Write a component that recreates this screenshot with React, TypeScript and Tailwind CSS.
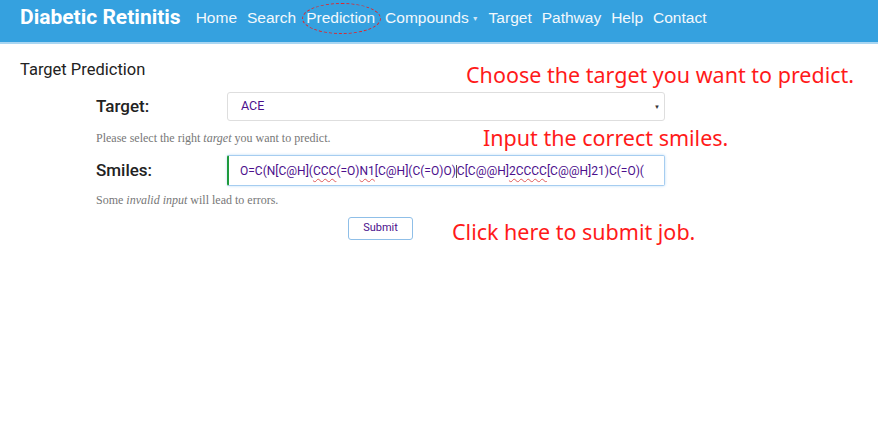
import { ReactNode } from 'react';

const navLinks = ['Home', 'Search', 'Prediction', 'Compounds', 'Target', 'Pathway', 'Help', 'Contact'];

function Squiggle({ children }: { children: ReactNode }) {
  return (
    <span className="underline decoration-wavy decoration-[#e05a5a] decoration-1 underline-offset-[3px]">
      {children}
    </span>
  );
}

function Note({ className, children }: { className: string; children: ReactNode }) {
  return (
    <div
      className={`absolute whitespace-nowrap text-[21.5px] leading-none text-[#ff1a1a] font-['Noto_Sans',sans-serif] ${className}`}
    >
      {children}
    </div>
  );
}

export default function App() {
  return (
    <div className="relative w-[878px] h-[422px] bg-white overflow-hidden font-['Roboto',sans-serif]">
      <header className="h-[44px] bg-[#35a1df] border-b-2 border-[#a9d6f2]">
        <div className="flex items-center h-[36px] pl-[20px]">
          <span className="text-[21px] font-bold text-white mr-[15px]">Diabetic Retinitis</span>
          <nav className="flex items-center gap-[10px] text-[15.5px] text-[#f2f8fc] font-['Liberation_Sans',sans-serif]">
            {navLinks.map((l) => (
              <span key={l} className="flex items-center">
                {l}
                {l === 'Compounds' && <span className="ml-[3px] mt-[3px] text-[7px] text-[#cfe6f6]">▼</span>}
              </span>
            ))}
          </nav>
        </div>
      </header>

      <main className="pl-[20px] pt-[16px]">
        <h1 className="text-[16.5px] text-[#222] leading-[20px]">Target Prediction</h1>

        <form className="w-[569px] ml-[76px] mt-[12px]">
          <div className="flex items-center">
            <label className="w-[131px] text-[17px] font-medium text-[#222]">Target:</label>
            <div className="flex-1 h-[29px] flex items-center justify-between border border-[#dedede] rounded-[3px] pl-[13px] pr-[4px] text-[12.5px] text-[#4b0f8c]">
              <span>ACE</span>
              <span className="text-[6px] text-[#333]">▼</span>
            </div>
          </div>
          <p className="mt-[8px] text-[12px] text-[#777] font-['Liberation_Serif',serif]">
            Please select the right <i>target</i> you want to predict.
          </p>

          <div className="flex items-center mt-[8px]">
            <label className="w-[131px] text-[17px] font-medium text-[#222]">Smiles:</label>
            <div className="flex-1 h-[31px] flex items-center overflow-hidden border border-[#a6cdf0] border-l-2 border-l-[#1e9a3c] rounded-[2px] pl-[11px] pr-[8px] text-[12px] text-[#4b0f8c] shadow-[0_0_3px_#bcdcf7]">
              <span className="whitespace-nowrap">
                O=C(N[C@H](<Squiggle>CCC</Squiggle>(=O)<Squiggle>N1</Squiggle>[C@H](C(=O)O)
                <span className="inline-block w-px h-[13px] bg-[#555] align-middle" />
                C[C@@H]<Squiggle>2CCCC</Squiggle>[C@@H]21)C(=O)(
              </span>
            </div>
          </div>
          <p className="mt-[5px] text-[12px] text-[#777] font-['Liberation_Serif',serif]">
            Some <i>invalid input</i> will lead to errors.
          </p>

          <div className="flex justify-center mt-[8px]">
            <button
              type="button"
              className="w-[65px] h-[23px] border border-[#8fbfe8] rounded-[3px] text-[11px] text-[#4b0f8c] bg-white"
            >
              Submit
            </button>
          </div>
        </form>
      </main>

      <div className="absolute left-[302px] top-[3px] w-[79px] h-[31px] rounded-[50%] border border-dashed border-[#e0262b]" />

      <Note className="left-[466px] top-[64px]">Choose the target you want to predict.</Note>
      <Note className="left-[483px] top-[127px]">Input the correct smiles.</Note>
      <Note className="left-[452px] top-[221px]">Click here to submit job.</Note>
    </div>
  );
}
